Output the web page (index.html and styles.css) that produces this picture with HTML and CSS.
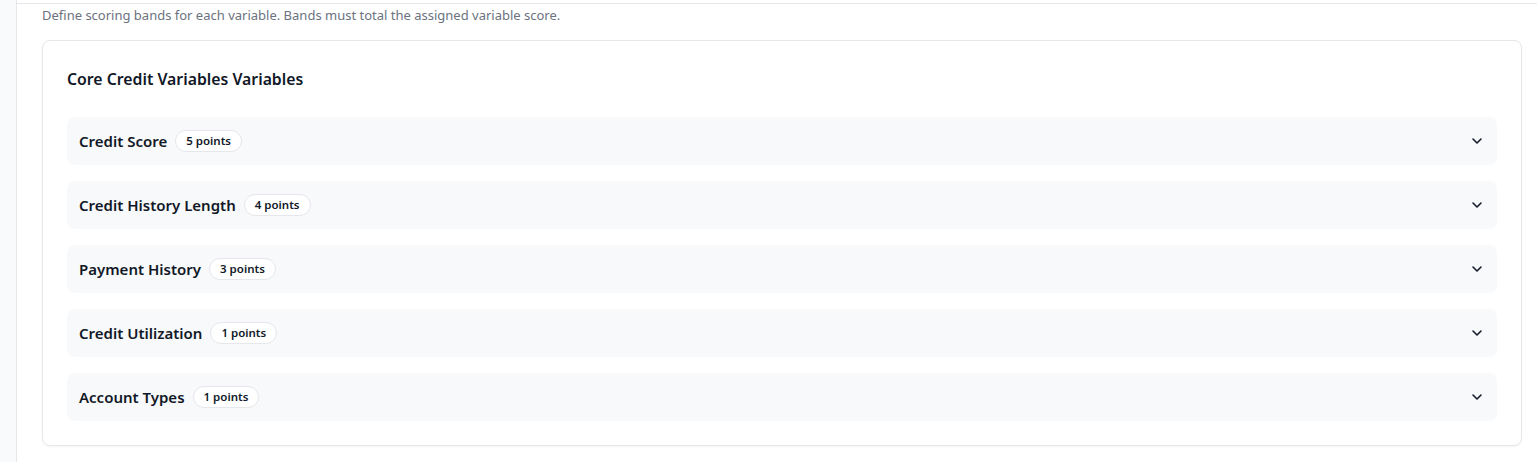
FILE: index.html
```html
<!DOCTYPE html>
<html lang="en">
<head>
<meta charset="utf-8">
<title>Scoring bands</title>
<link rel="stylesheet" href="styles.css">
</head>
<body>
<div class="layout">
  <aside class="sidebar"></aside>
  <main class="main">
    <div class="topline"></div>
    <div class="content">
      <p class="desc">Define scoring bands for each variable. Bands must total the assigned variable score.</p>
      <section class="card">
        <h2 class="card-title">Core Credit Variables Variables</h2>
        <div class="rows">
          <div class="row"><div class="row-left"><span class="row-name">Credit Score</span><span class="badge">5 points</span></div><svg class="chev" viewBox="0 0 16 16" width="16" height="16"><path d="M4 6l4 4 4-4" fill="none" stroke="currentColor" stroke-width="1.6" stroke-linecap="round" stroke-linejoin="round"/></svg></div>
          <div class="row"><div class="row-left"><span class="row-name">Credit History Length</span><span class="badge">4 points</span></div><svg class="chev" viewBox="0 0 16 16" width="16" height="16"><path d="M4 6l4 4 4-4" fill="none" stroke="currentColor" stroke-width="1.6" stroke-linecap="round" stroke-linejoin="round"/></svg></div>
          <div class="row"><div class="row-left"><span class="row-name">Payment History</span><span class="badge">3 points</span></div><svg class="chev" viewBox="0 0 16 16" width="16" height="16"><path d="M4 6l4 4 4-4" fill="none" stroke="currentColor" stroke-width="1.6" stroke-linecap="round" stroke-linejoin="round"/></svg></div>
          <div class="row"><div class="row-left"><span class="row-name">Credit Utilization</span><span class="badge">1 points</span></div><svg class="chev" viewBox="0 0 16 16" width="16" height="16"><path d="M4 6l4 4 4-4" fill="none" stroke="currentColor" stroke-width="1.6" stroke-linecap="round" stroke-linejoin="round"/></svg></div>
          <div class="row"><div class="row-left"><span class="row-name">Account Types</span><span class="badge">1 points</span></div><svg class="chev" viewBox="0 0 16 16" width="16" height="16"><path d="M4 6l4 4 4-4" fill="none" stroke="currentColor" stroke-width="1.6" stroke-linecap="round" stroke-linejoin="round"/></svg></div>
        </div>
      </section>
    </div>
  </main>
</div>
</body>
</html>
```
FILE: styles.css
```css
* { box-sizing: border-box; }
html, body { margin: 0; padding: 0; background: #ffffff; }
body { font-family: "Noto Sans", "Open Sans", sans-serif; color: #111827; }
.layout { display: flex; min-height: 462px; }
.sidebar { width: 17px; flex: 0 0 17px; background: #f9fafb; border-right: 1px solid #e5e7eb; }
.main { flex: 1; padding-top: 3px; }
.topline { height: 1px; background: #e5e7eb; }
.content { padding: 0 15px 0 25px; }
.desc { margin: 0; padding-top: 2px; font-size: 13px; line-height: 18px; color: #6b7280; }
.card { margin-top: 16px; border: 1px solid #e5e7eb; border-radius: 8px; padding: 24px 24px 24px; background: #fff; box-shadow: 0 1px 2px rgba(0,0,0,0.04); }
.card-title { margin: 0 0 24px; font-size: 15.8px; line-height: 28px; font-weight: 600; }
.rows { display: flex; flex-direction: column; gap: 16px; }
.row { height: 48px; display: flex; align-items: center; justify-content: space-between; padding: 0 12px; background: #f8f9fa; border-radius: 8px; }
.row-left { display: flex; align-items: center; gap: 8px; }
.row-name { font-size: 15px; font-weight: 600; }
.badge { font-size: 11.5px; font-weight: 600; line-height: 20px; padding: 0 10px; border: 1px solid #e5e7eb; border-radius: 999px; background: #fff; }
.chev { color: #111827; margin-right: 0; }
```
